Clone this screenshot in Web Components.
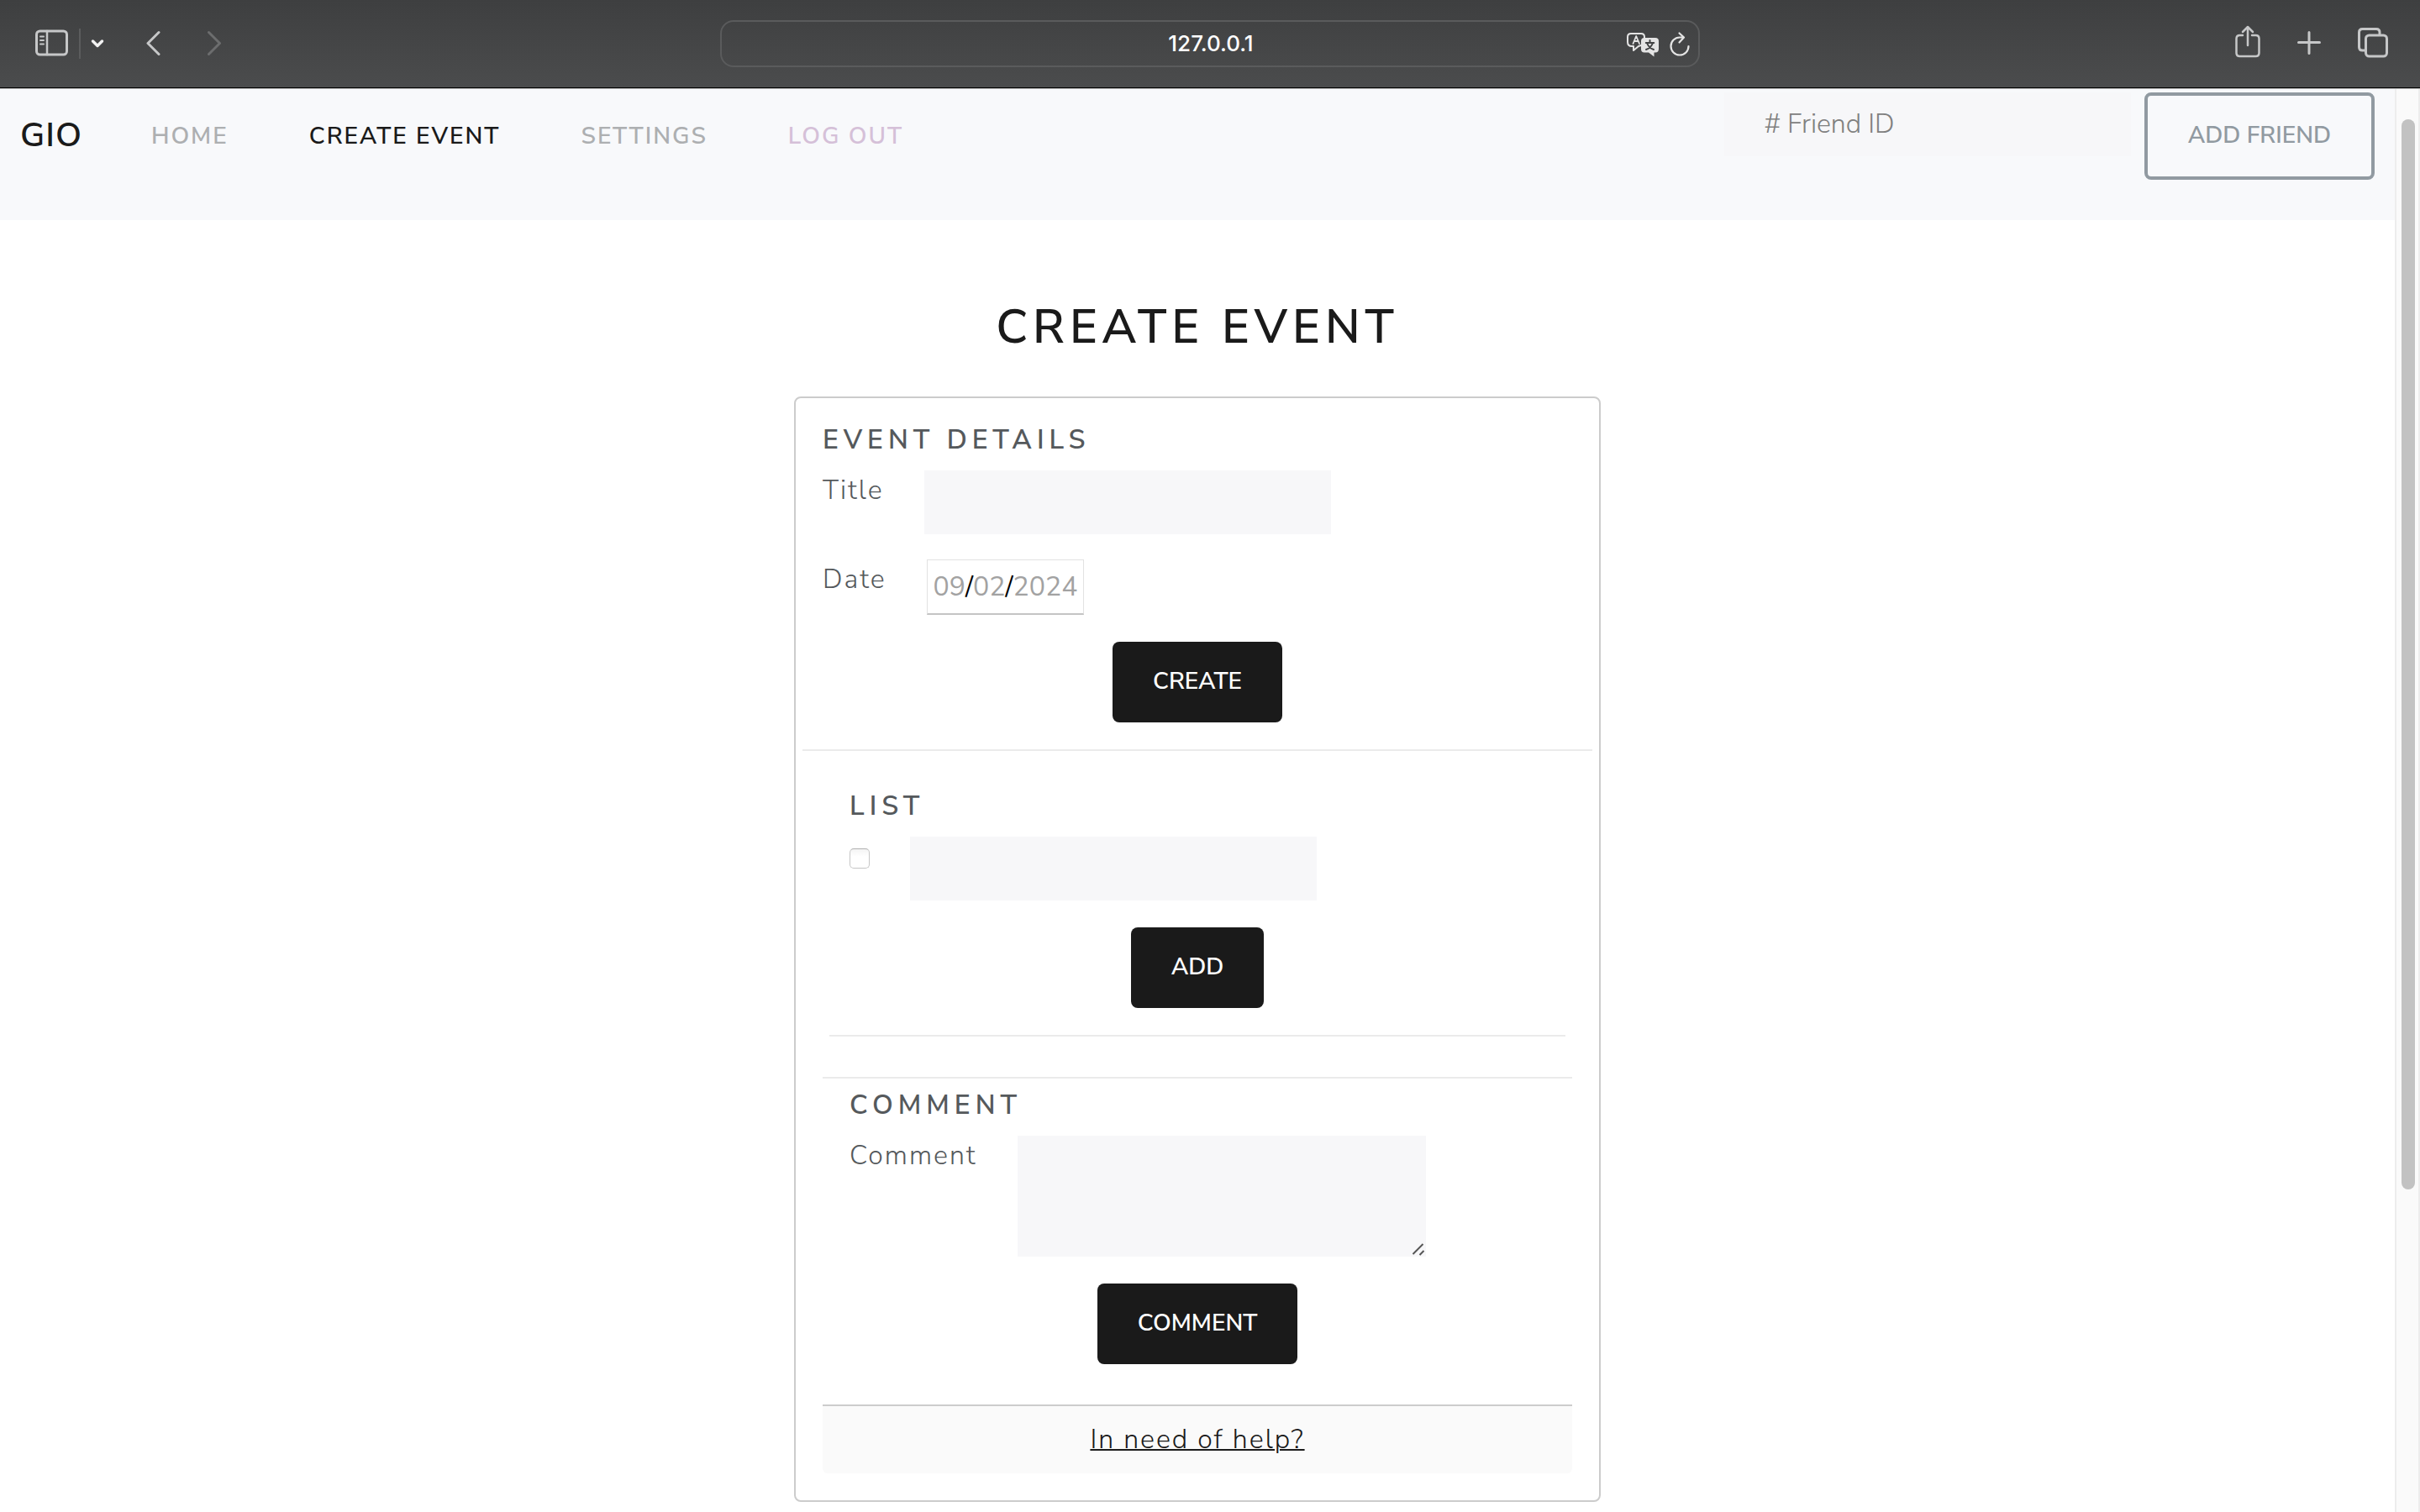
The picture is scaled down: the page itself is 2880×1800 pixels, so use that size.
<!DOCTYPE html>
<html lang="en">
<head>
<meta charset="utf-8">
<title>Create event</title>
<style>
  body {
    margin: 0;
    min-height: 100vh;
    display: flex;
    flex-direction: column;
    background: #fff;
    color: #55595c;
    font: 300 32px/48px "Nunito Sans", Lato, "Open Sans", sans-serif;
  }
  .viewport { flex: 1; display: flex; }
  .page { flex: 1; min-width: 0; }
</style>
</head>
<body>
<browser-toolbar address="127.0.0.1"></browser-toolbar>
<div class="viewport">
  <div class="page">
    <site-nav>
      <nav-link slot="links">Home</nav-link>
      <nav-link slot="links" state="active">Create event</nav-link>
      <nav-link slot="links">Settings</nav-link>
      <nav-link slot="links" state="leave">Log out</nav-link>
    </site-nav>
    <event-page heading="Create event">
      <form-section heading="Event details">
        <form-field label="Title" type="text"></form-field>
        <form-field label="Date" type="date" value="2024-09-02"></form-field>
        <action-button slot="action">Create</action-button>
      </form-section>
      <rule-line></rule-line>
      <form-section heading="List" variant="list">
        <list-entry></list-entry>
        <action-button slot="action">Add</action-button>
      </form-section>
      <rule-line inset="list"></rule-line>
      <rule-line inset="comment"></rule-line>
      <form-section heading="Comment" variant="comment">
        <form-field label="Comment" type="textarea"></form-field>
        <action-button slot="action">Comment</action-button>
      </form-section>
      <help-footer>In need of help?</help-footer>
    </event-page>
  </div>
  <scroll-track></scroll-track>
</div>

<script>
const define = (name, html) => customElements.define(name, class extends HTMLElement {
  constructor() {
    super();
    this.attachShadow({ mode: "open" });
  }
  connectedCallback() {
    const attr = (key) => this.getAttribute(key) || "";
    this.shadowRoot.innerHTML = typeof html === "function" ? html(attr) : html;
  }
});

const fieldStyles = `
  .control {
    box-sizing: border-box; display: block; width: 484px; height: 76px; margin: 0;
    padding: 0 48px 2px; border: 0; border-radius: 0; outline: 0;
    background: #f7f7f9; color: #55595c; font: inherit; line-height: 44px;
  }
  .control::placeholder { color: #808080; opacity: 1; }
`;

define("browser-toolbar", (attr) => `
  <style>
    :host {
      display: grid; grid-template-columns: minmax(0, 1fr) 40.5% minmax(0, 1fr); align-items: center;
      height: 104px; border-bottom: 1px solid #000; box-shadow: 0 1px #b5b5b5;
      margin-bottom: 1px;
      background: linear-gradient(#3e3f40, #4b4c4d);
      color: #c6c7c8;
    }
    .group { display: flex; align-items: center; }
    .left { padding-left: 42px; }
    .right { justify-content: flex-end; gap: 44px; padding-right: 38px; }
    button { display: block; margin: 0; padding: 0; border: 0; background: none; color: inherit; }
    svg { display: block; fill: none; stroke: currentColor; stroke-width: 3; stroke-linecap: round; stroke-linejoin: round; }
    .divider { width: 2px; height: 36px; margin: 0 12px; background: #5b5c5d; }
    .bright { color: #f2f2f2; }
    .back { margin: 0 54px 0 50px; }
    .dim { color: #6c6d6e; }
    .address {
      box-sizing: border-box; height: 56px; display: grid;
      grid-template-columns: 96px minmax(0, 1fr) 94px; align-items: center;
      border: 2px solid #5a5b5c; border-radius: 16px; color: #e4e4e4;
    }
    .address input {
      grid-column: 2; width: 100%; margin: 0; padding: 0; border: 0; outline: 0; background: none;
      color: #fff; text-align: center; font: 500 26px/36px Inter, "Liberation Sans", sans-serif;
    }
    .tools { display: flex; justify-content: flex-end; gap: 12px; padding-right: 10px; }
  </style>
  <div class="group left">
    <button aria-label="Show sidebar"><svg width="40" height="44" viewBox="0 0 40 44">
      <rect x="1.5" y="7" width="36" height="28" rx="4"/><path stroke-width="2.500" d="M14 7v28"/><path stroke-width="2" d="M6 13.500h4M6 18h4M6 22.500h4"/></svg></button>
    <span class="divider"></span>
    <button class="bright" aria-label="Tab groups"><svg width="16" height="44" viewBox="0 0 16 44"><path stroke-width="3.500" d="M2.500 19l5.500 5.500L13.500 19"/></svg></button>
    <button class="back" aria-label="Back"><svg width="18" height="44" viewBox="0 0 18 44"><path d="M15 8.500L2 21.500l13 13"/></svg></button>
    <button class="dim" aria-label="Forward"><svg width="18" height="44" viewBox="0 0 18 44"><path d="M2.500 8.500l13 13-13 13"/></svg></button>
  </div>
  <div class="address">
    <input type="text" aria-label="Address" value="${attr("address")}">
    <div class="tools">
      <button aria-label="Translate"><svg width="39" height="44" viewBox="0 0 39 44">
        <path stroke-width="2" d="M17 24l-3 1-6 5v-5H6q-5 0-5-5v-6q0-4 4-4h12q4 0 4 4v2"/>
        <path stroke-width="1.800" d="M7.500 22L11.200 13 15 22M8.700 19h5"/>
        <path fill="currentColor" stroke="none" d="M21 15h13q4 0 4 4v9q0 4.500-4 4.500h-1.500v5L26 32.500h-5q-4 0-4-4V19q0-4 4-4z"/>
        <path stroke="#424344" stroke-width="2" d="M27.500 18v2.500M22.800 21h9.500M31 21q-2 6-8 8M24 21q2 6 8 8"/></svg></button>
      <button aria-label="Reload"><svg width="24" height="44" viewBox="0 0 24 44">
        <path stroke-width="2.200" d="M15 14.500h-3A10.500 10.500 0 1 0 22.500 25M11.500 9.500l5.500 5-5.500 6"/></svg></button>
    </div>
  </div>
  <div class="group right">
    <button aria-label="Share"><svg width="30" height="44" viewBox="0 0 30 44">
      <path stroke-width="2.500" d="M9 12H5.500q-4 0-4 4v17q0 4 4 4h19q4 0 4-4V16q0-4-4-4H20M15 24V3M9 8l6-6 6 6"/></svg></button>
    <button aria-label="New tab"><svg width="28" height="44" viewBox="0 0 28 44"><path d="M14 8.500v25M1.500 20.500h25"/></svg></button>
    <button aria-label="Tab overview"><svg width="36" height="44" viewBox="0 0 36 44">
      <rect x="9.500" y="12" width="25" height="25" rx="4"/><path d="M26 10.500V8.500q0-4-4-4H5.500q-4 0-4 4V26q0 4 4 4H8"/></svg></button>
  </div>
`);

define("site-nav", `
  <style>
    :host { display: flex; align-items: center; padding: 4px 24px 48px; background: #f8f9fb; }
    .brand { margin-right: 82px; padding-bottom: 2px; color: #1a1a1a; font-size: 40px; line-height: 60px; font-weight: 600; letter-spacing: 1px; text-decoration: none; }
    nav { display: flex; gap: 96px; }
    form { flex: 1; display: flex; justify-content: flex-end; align-items: flex-start; gap: 16px; }
    ${fieldStyles}
  </style>
  <a class="brand" href="#">GIO</a>
  <nav><slot name="links"></slot></nav>
  <form>
    <input class="control" type="text" placeholder="# Friend ID" aria-label="Friend ID">
    <action-button variant="outline">Add friend</action-button>
  </form>
`);

define("nav-link", `
  <style>
    :host { display: block; color: #adafb1; }
    :host([state="active"]) { color: #1a1a1a; }
    :host([state="leave"]) { color: #d5c0d8; }
    a { display: block; color: inherit; font-size: 28px; line-height: 42px; font-weight: 600; letter-spacing: 2px; text-transform: uppercase; text-decoration: none; }
  </style>
  <a href="#"><slot></slot></a>
`);

define("action-button", `
  <style>
    :host { display: block; }
    button {
      display: block; box-sizing: border-box; height: 96px; margin: 0; padding: 0 48px 2px;
      border: 0; border-radius: 8px; background: #1a1a1a; color: #fff;
      font: inherit; font-size: 28px; line-height: 42px; font-weight: 600; text-transform: uppercase;
    }
    :host([variant="outline"]) button { height: 104px; border: 4px solid #919aa1; background: none; color: #919aa1; }
  </style>
  <button type="button"><slot></slot></button>
`);

define("event-page", (attr) => `
  <style>
    :host { display: flex; flex-direction: column; align-items: center; gap: 48px; padding: 94px 24px 12px; }
    h1 { margin: 0; color: #1a1a1a; font-size: 56px; line-height: 68px; font-weight: 600; letter-spacing: 6px; text-transform: uppercase; }
    .card { box-sizing: border-box; width: 100%; max-width: 960px; padding: 26px 8px 32px; border: 2px solid #ccc; border-radius: 8px; }
  </style>
  <h1>${attr("heading")}</h1>
  <div class="card"><slot></slot></div>
`);

define("form-section", (attr) => `
  <style>
    :host { display: block; padding: 0 24px 32px; }
    :host([variant="list"]) { padding: 42px 56px 32px; }
    :host([variant="comment"]) { padding: 8px 56px 48px; }
    h2 { margin: 0 0 12px; font-size: 32px; line-height: 48px; font-weight: 600; letter-spacing: 6px; text-transform: uppercase; }
    .fields { display: flex; flex-direction: column; gap: 30px; letter-spacing: 2px; }
    .actions { display: flex; justify-content: center; margin-top: 32px; }
  </style>
  <h2>${attr("heading")}</h2>
  <div class="fields"><slot></slot></div>
  <div class="actions"><slot name="action"></slot></div>
`);

define("form-field", (attr) => {
  const type = attr("type");
  const control = {
    text: `<input id="control" class="control" type="text">`,
    date: `<input id="control" class="date" type="date" value="${attr("value")}">`,
    textarea: `<div class="area"><textarea id="control" class="control"></textarea>
      <svg width="16" height="16" viewBox="0 0 16 16"><path d="M1.500 14L13.500 2M9.500 15l5-5"/></svg></div>`
  }[type];
  return `
  <style>
    :host { display: flex; align-items: flex-start; gap: 48px; }
    ${fieldStyles}
    .date {
      box-sizing: border-box; display: block; width: 187px; height: 66px; margin: 0; padding: 0 0 0 7px;
      border: 1px solid #e2e2e2; border-bottom: 2px solid #c4c4c4; border-radius: 0; outline: 0;
      background: #fff; color: #000; font: inherit; font-weight: 400; line-height: 44px; letter-spacing: 0;
    }
    .date::-webkit-calendar-picker-indicator { display: none; }
    .date::-webkit-datetime-edit, .date::-webkit-datetime-edit-fields-wrapper { padding: 0; }
    .date::-webkit-datetime-edit-month-field,
    .date::-webkit-datetime-edit-day-field,
    .date::-webkit-datetime-edit-year-field { padding: 0; color: #a2a2a2; }
    .area { position: relative; }
    textarea.control { width: 486px; height: 144px; padding: 16px 48px; resize: none; }
    svg { position: absolute; right: 1px; bottom: 1px; fill: none; stroke: #555; stroke-width: 2; }
  </style>
  <label for="control">${attr("label")}</label>
  ${control}`;
});

define("list-entry", `
  <style>
    :host { display: flex; align-items: flex-start; gap: 48px; }
    ${fieldStyles}
    .tick {
      appearance: none; box-sizing: border-box; width: 24px; height: 24px; margin: 14px 0 0;
      border: 1px solid #c6c6c6; border-top-color: #b0b0b0; border-radius: 5px;
      background: linear-gradient(#f4f4f4, #fff 40%);
    }
  </style>
  <input class="tick" type="checkbox" aria-label="Done">
  <input class="control" type="text" aria-label="List item">
`);

define("rule-line", `
  <style>
    :host { display: block; }
    hr { margin: 0; height: 2px; border: 0; background: #ebebeb; }
    :host([inset="list"]) { padding: 0 32px 48px; }
    :host([inset="comment"]) { padding: 0 24px; }
  </style>
  <hr>
`);

define("help-footer", `
  <style>
    :host { display: block; margin: 0 24px; padding: 16px 0; border-top: 2px solid #ccc; border-radius: 0 0 6px 6px; background: #fafafa; text-align: center; letter-spacing: 2px; }
    a { color: #1a1a1a; text-decoration: underline; text-decoration-thickness: 2px; }
  </style>
  <a href="#"><slot></slot></a>
`);

define("scroll-track", `
  <style>
    :host {
      box-sizing: border-box; width: 30px; display: grid; grid-template-rows: 1274fr 384fr;
      padding: 36px 4px 0 6px; border: solid; border-width: 0 2px; border-color: #e8e8e8 #ededed; background: #fafafa;
    }
    .thumb { border-radius: 8px; background: #c2c2c2; }
  </style>
  <div class="thumb"></div>
`);
</script>
</body>
</html>
